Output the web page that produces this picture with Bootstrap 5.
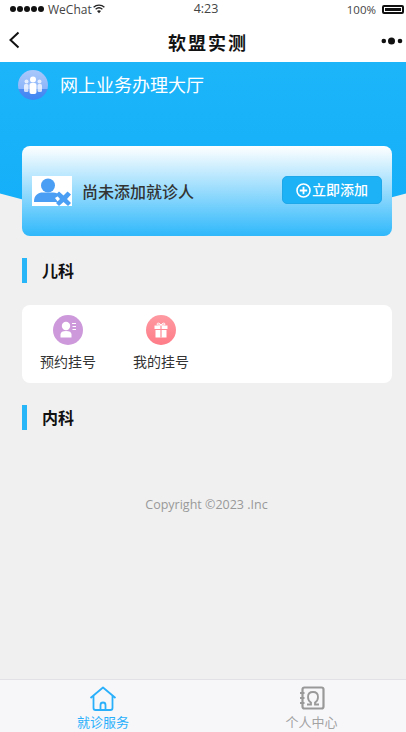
<!DOCTYPE html>
<html lang="zh"><head><meta charset="utf-8"><title>软盟实测</title>
<link href="https://cdn.jsdelivr.net/npm/bootstrap@5.3.0/dist/css/bootstrap.min.css" rel="stylesheet">
<style>
html,body{height:732px;overflow:hidden}
body{background:#f0f0f0;font-family:"Open Sans","Noto Sans CJK SC",sans-serif;color:#333}
.screen{height:732px}
.statusbar{height:20px;font-size:12px;color:#444;padding:0 0 0 10px;background:#fff}
.statusbar .tm{position:absolute;left:6px;right:0;text-align:center;line-height:17px;font-size:12.500px}
.sleft{gap:4px;line-height:17px}
.dots5{gap:1px}
.dots5 i{width:6px;height:6px;border-radius:50%;background:#111;display:block}
.batt{width:22px;height:9px;border:2px solid #111;border-radius:2px;display:block;background:#111;box-shadow:inset 0 0 0 1px #fff;margin:5px 2px 0 0}
.pct{font-size:11.500px;margin-right:6px;margin-top:2px;line-height:16px}
.topbar{height:42px;background:#fff;padding:0 3px 0 8px}
.ttl{font-size:18px;font-weight:700;letter-spacing:2px;color:#111;line-height:44px;height:42px;padding-left:10px;font-family:"Noto Sans CJK SC","Liberation Serif",serif}
.hero{height:174px;position:relative}
.hero::before{content:"";position:absolute;inset:0;background:linear-gradient(#1cb5fa,#12aef8);clip-path:circle(736px at 50% -576px)}
.hero>*{position:relative}
.hrow{padding:7px 18px 0;gap:12px;color:#fff;font-size:18px;line-height:32px}
.hicon{width:30px;height:30px;display:block}
.ucard{margin:45px 14px 0 22px;height:90px;border-radius:8px;background:linear-gradient(#fff,#2fb8fb);padding:0 10px;gap:10px}
.uimg{width:40px;height:30px;background:#fff;display:block;flex:none}
.utxt{font-size:16px;font-weight:500;color:#333;padding-top:2px}
.addbtn{background:#1db1f6;border:1px solid #1ea8ea;border-radius:5px;color:#fff;font-size:14px;font-weight:500;height:28px;width:100px;padding:0;gap:1px;line-height:24px;margin-top:-2px}
.sect{margin:22px 14px 0 22px;height:25px;border-left:5px solid #29b6f9;padding-left:15px;font-size:16px;font-weight:700;color:#111;line-height:27px}
.wcard{margin:22px 14px 0 22px;height:78px;background:#fff;border-radius:8px}
.gitem{width:92px;font-size:14px;color:#333;line-height:20px}
.gitem+.gitem{margin-left:1px}
.gic{width:30px;height:30px;display:block;margin:10px auto 7px}
.copyr{color:#999;font-size:12.500px;margin-top:65px;line-height:20px;padding-left:7px}
.tabs{height:53px;background:#f7f7fa;border-top:1px solid #e2e2e6;margin-top:auto}
.tabi{width:50%;font-size:13px;color:#a3a3a3;line-height:18px;height:52px;overflow:hidden;padding-left:3px}
.tabi+.tabi{padding-left:14px}
.tabi.on{color:#2ab0fb}
.tabi svg{display:block;margin:6px auto 2px;width:28px;height:25px}
</style></head><body>
<div class="screen d-flex flex-column">
<div class="statusbar d-flex justify-content-between position-relative">
 <div class="sleft d-flex align-items-center" style="height:18px"><span class="dots5 d-flex"><i></i><i></i><i></i><i></i><i></i></span><span>WeChat</span>
 <svg width="12" height="10" viewBox="0 0 12 10" style="margin-left:-3px"><path d="M.6 3.2C3.6.4 8.4.4 11.4 3.2M2.6 5.2c2-1.7 4.800-1.700 6.800 0" fill="none" stroke="#222" stroke-width="1.300"/><path d="M4 7c1.200-.9 2.800-.9 4 0L6 9.300z" fill="#222"/></svg></div>
 <div class="tm">4:23</div>
 <div class="d-flex align-items-start"><span class="pct">100%</span><span class="batt"></span></div>
</div>
<div class="topbar d-flex align-items-center justify-content-between position-relative">
 <svg width="14" height="20" viewBox="0 0 14 20" style="margin-top:-2px"><path d="M10.500 2.500 2.500 10l8 7.500" fill="none" stroke="#111" stroke-width="2"/></svg>
 <div class="ttl position-absolute start-0 end-0 text-center">软盟实测</div>
 <svg width="22" height="10" viewBox="0 0 22 10"><circle cx="2.800" cy="5" r="2.300" fill="#111"/><circle cx="10.500" cy="5" r="3.500" fill="#111"/><circle cx="19" cy="5" r="2.300" fill="#111"/></svg>
</div>
<div class="hero">
 <div class="hrow d-flex align-items-center">
  <svg class="hicon" viewBox="0 0 30 30"><defs><linearGradient id="h1" x1="0" y1="0" x2="0" y2="1"><stop offset="0" stop-color="#a9c8fb"/><stop offset=".62" stop-color="#8eb6fa"/><stop offset=".63" stop-color="#4f8df4"/><stop offset="1" stop-color="#3f86f2"/></linearGradient></defs><circle cx="15" cy="15" r="15" fill="url(#h1)"/><g fill="#fff"><circle cx="15" cy="9.500" r="3"/><rect x="11.500" y="13" width="7" height="11" rx="2"/></g><g fill="#fff" opacity=".75"><circle cx="8.500" cy="11.500" r="2"/><rect x="6" y="14" width="4.500" height="8" rx="1.500"/><circle cx="21.500" cy="11.500" r="2"/><rect x="19.500" y="14" width="4.500" height="8" rx="1.500"/></g></svg>
  <span>网上业务办理大厅</span>
 </div>
 <div class="ucard d-flex align-items-center">
  <svg class="uimg" viewBox="0 0 40 30"><g fill="#4a9ff5"><circle cx="16" cy="9.500" r="7"/><path d="M2 26c0-7 4-9.500 9-9.500h10c3 0 5 1 6 3l-4 2.500 3 4H3.500Q2 26 2 26z"/><path d="M27 15.500l4.500 4 4-4 3.500 3-4 4.500 4 4-3 3-4.500-4-4.500 4-3-3 4-4-4-4.500z"/></g></svg>
  <span class="utxt">尚未添加就诊人</span>
  <button class="addbtn btn d-flex align-items-center justify-content-center ms-auto" type="button">
  <svg width="15" height="15" viewBox="0 0 15 15"><circle cx="7.500" cy="7.500" r="6.500" fill="none" stroke="#fff" stroke-width="1.600"/><path d="M3.800 7.500h7.400M7.500 3.800v7.400" stroke="#fff" stroke-width="1.800"/></svg><span>立即添加</span></button>
 </div>
</div>
<div class="sect">儿科</div>
<div class="wcard d-flex">
 <div class="gitem text-center"><svg class="gic" viewBox="0 0 30 30"><circle cx="15" cy="15" r="15" fill="#cd99da"/><g fill="#fff"><circle cx="13" cy="11" r="4.200"/><path d="M7.500 22.500v-3c0-2.500 2-3.500 5.500-3.500s5.500 1 5.500 3.500v3z"/><rect x="19" y="8" width="4" height="1"/><rect x="19.500" y="11" width="3.500" height="1"/><rect x="19.500" y="14" width="3.500" height="1"/></g></svg>预约挂号</div>
 <div class="gitem text-center"><svg class="gic" viewBox="0 0 30 30"><defs><linearGradient id="g2" x1="0" y1="0" x2="0" y2="1"><stop offset="0" stop-color="#fe9aa2"/><stop offset="1" stop-color="#fe7c88"/></linearGradient></defs><circle cx="15" cy="15" r="15" fill="url(#g2)"/><g fill="#fff"><rect x="8.500" y="10.500" width="13" height="3.500"/><rect x="9.500" y="15" width="11" height="7.500"/></g><path d="M15 10.500V22.500" stroke="#fe8c96" stroke-width="1.200"/><path d="M15 10c-2-3-5-2-3.500 0zM15 10c2-3 5-2 3.500 0z" fill="none" stroke="#fff" stroke-width="1"/></svg>我的挂号</div>
</div>
<div class="sect">内科</div>
<div class="copyr text-center">Copyright ©2023 .Inc</div>
<div class="tabs d-flex">
 <div class="tabi on text-center"><svg viewBox="0 0 28 25"><path d="M1.500 12 14 1.500 26.500 12M4.500 10v12q0 2 2 2h15q2 0 2-2V10M11.500 24v-5q0-2.500 2.500-2.500t2.500 2.500v5" fill="none" stroke="#2ab0fb" stroke-width="1.800" stroke-linejoin="round"/></svg>就诊服务</div>
 <div class="tabi text-center"><svg viewBox="0 0 28 25"><rect x="4.500" y="1.500" width="21" height="21" rx="2" fill="none" stroke="#999" stroke-width="2.200"/><path d="M2 7h4.500M2 12h4.500M2 17h4.500" stroke="#999" stroke-width="1.800"/><path d="M9 18.500h4v-2c-2-1-3-3-3-5.500 0-3 2-5 5-5s5 2 5 5c0 2.500-1 4.500-3 5.500v2h4" fill="none" stroke="#999" stroke-width="1.800"/></svg>个人中心</div>
</div>
</div>
</body></html>
